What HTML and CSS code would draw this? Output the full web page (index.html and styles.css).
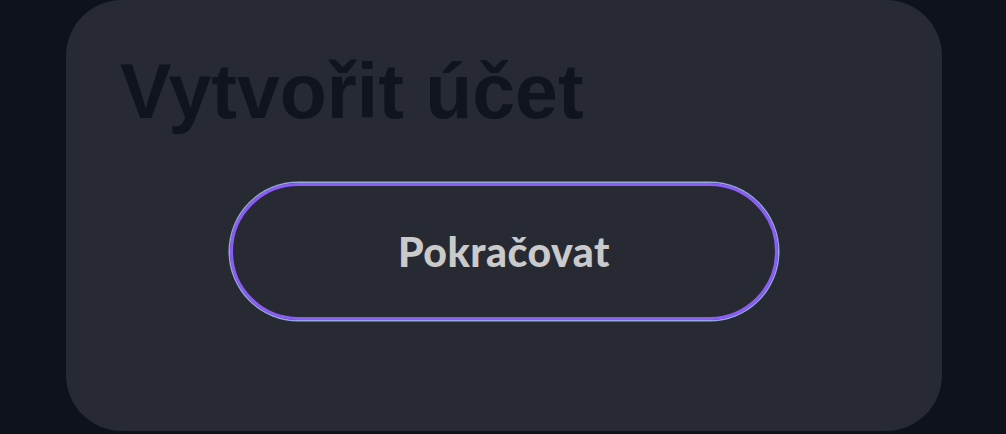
FILE: index.html
```html
<!DOCTYPE html>
<html lang="cs">
<head>
    <meta charset="UTF-8">
    <meta name="viewport" content="width=device-width, initial-scale=1.0">
    <title>Vytvořit účet</title>
    <link rel="stylesheet" href="styles.css">
</head>
<body>

    <div class="card">
        <h1 class="card-title">Vytvořit účet</h1>
        <div class="actions">
            <button class="btn-continue">Pokračovat</button>
        </div>
    </div>

</body>
</html>
```

FILE: styles.css
```css
/* page */
body {
    margin: 0;
    background-color: #0e121a;
    font-family: "Liberation Sans", Arial, sans-serif;
}

/* card */
.card {
    box-sizing: border-box;
    width: 876px;
    height: 431px;
    margin: 0 0 0 66px;
    padding: 48px 54px 0;
    background-color: #272a33;
    border-radius: 56px;
}

.card-title {
    margin: 0;
    font-size: 77px;
    font-weight: bold;
    line-height: 87px;
    color: #10141c;
}

.actions {
    display: flex;
    justify-content: center;
    margin-top: 48px;
}

.btn-continue {
    box-sizing: border-box;
    width: 548px;
    height: 137px;
    background: transparent;
    border: 3px solid #8b5cf6;
    border-radius: 69px;
    box-shadow: 0 0 0 1.5px #93a8e0;
    font-family: Lato, sans-serif;
    font-size: 41px;
    font-weight: 900;
    letter-spacing: 0.5px;
    color: #cacaca;
    cursor: pointer;
}
```
